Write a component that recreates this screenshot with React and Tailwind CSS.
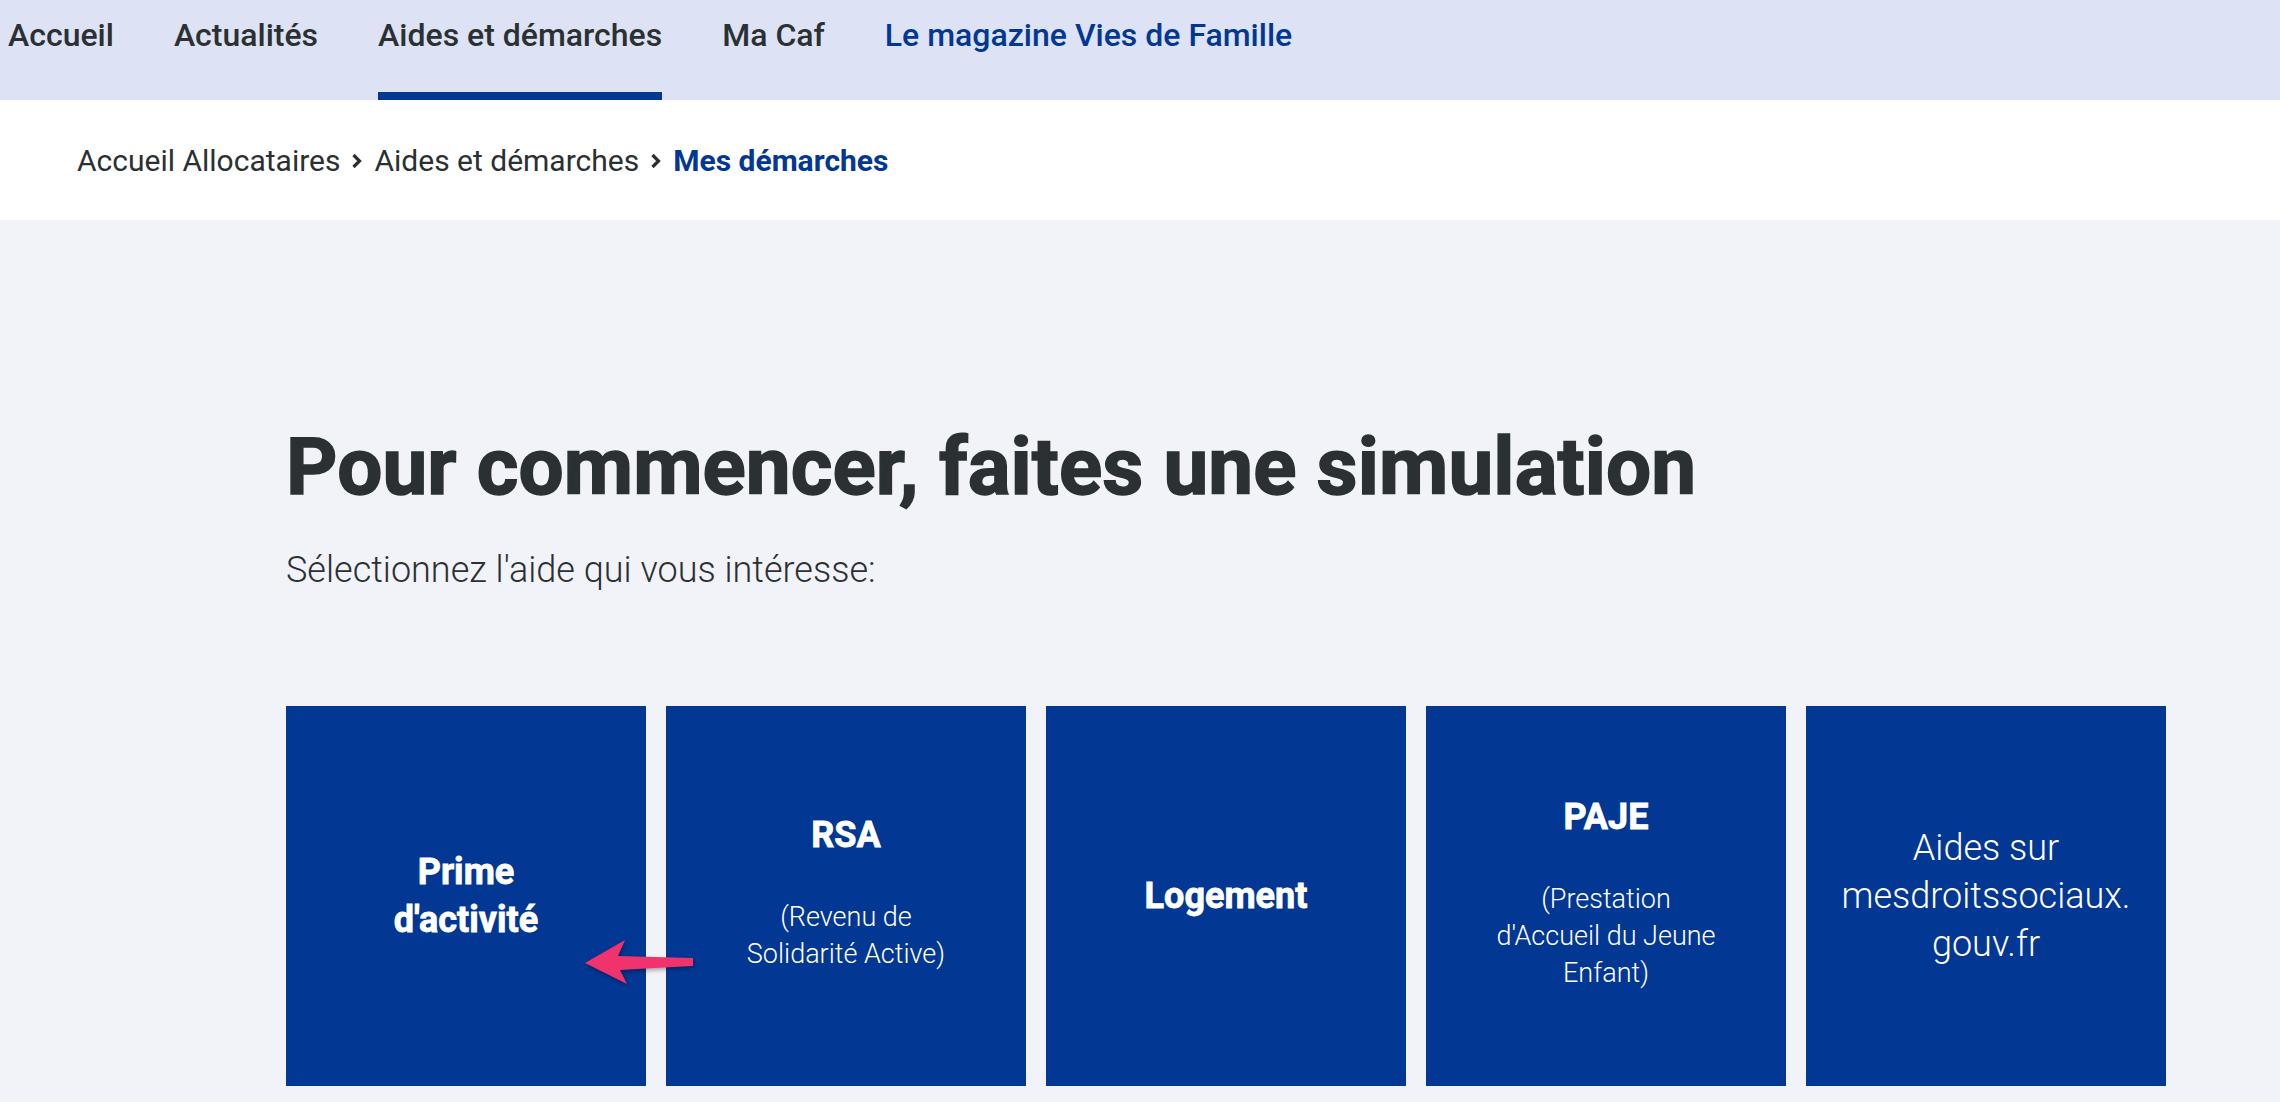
import React from "react";

const navItems = [
  { label: "Accueil" },
  { label: "Actualités" },
  { label: "Aides et démarches", active: true },
  { label: "Ma Caf" },
  { label: "Le magazine Vies de Famille", blue: true },
];

const tiles = [
  { title: ["Prime", "d'activité"] },
  { title: ["RSA"], sub: ["(Revenu de", "Solidarité Active)"] },
  { title: ["Logement"] },
  { title: ["PAJE"], sub: ["(Prestation", "d'Accueil du Jeune", "Enfant)"] },
  { plain: ["Aides sur", "mesdroitssociaux.", "gouv.fr"] },
];

const Chevron = () => (
  <svg width="12" height="16" viewBox="0 0 12 16" className="mx-[11px] mt-[2px]">
    <path d="M2.5 2 L8.5 8 L2.5 14" fill="none" stroke="#2b3033" strokeWidth="3.2" />
  </svg>
);

const Tile = ({ tile }) => (
  <div className="w-[360px] h-[380px] bg-[#023793] flex flex-col items-center justify-center text-center text-white">
    {tile.title && (
      <div className="font-bold text-[36px] leading-[48px] [-webkit-text-stroke:0.8px_white]">
        {tile.title.map((line) => (
          <div key={line}>{line}</div>
        ))}
      </div>
    )}
    {tile.sub && (
      <div className="mt-[40px] mb-[8px] font-light text-[27px] leading-[37px]">
        {tile.sub.map((line) => (
          <div key={line}>{line}</div>
        ))}
      </div>
    )}
    {tile.plain && (
      <div className="font-light text-[36px] leading-[48px]">
        {tile.plain.map((line) => (
          <div key={line}>{line}</div>
        ))}
      </div>
    )}
  </div>
);

const App = () => {
  return (
    <div className="min-h-screen bg-[#f2f3f8] font-[Roboto,sans-serif] text-[#2b3033]">
      <nav className="h-[100px] bg-[#dde3f4] flex gap-[60px] pl-[8px]">
        {navItems.map((item) => (
          <div key={item.label} className="flex flex-col justify-between">
            <span
              className={`pt-[16px] text-[32px] leading-[38px] font-medium whitespace-nowrap ${
                item.blue ? "text-[#023793]" : "text-[#2b3033]"
              }`}
            >
              {item.label}
            </span>
            <div className={`h-[8px] ${item.active ? "bg-[#023793]" : ""}`} />
          </div>
        ))}
      </nav>

      <div className="h-[120px] bg-white flex items-center pl-[77px] text-[30px]">
        <span>Accueil Allocataires</span>
        <Chevron />
        <span>Aides et démarches</span>
        <Chevron />
        <span className="font-bold text-[#023793]">Mes démarches</span>
      </div>

      <main className="pl-[286px] pt-[199px] pb-[16px]">
        <h1 className="text-[80px] leading-[96px] font-bold text-[#2b3033] tracking-[0.1px] [-webkit-text-stroke:1.5px_#2b3033]">
          Pour commencer, faites une simulation
        </h1>
        <p className="mt-[35px] text-[36px] leading-[40px] font-light">
          Sélectionnez l'aide qui vous intéresse:
        </p>

        <div className="relative mt-[116px] flex gap-[20px]">
          {tiles.map((tile, i) => (
            <Tile key={i} tile={tile} />
          ))}
          <svg
            width="120"
            height="60"
            viewBox="0 0 120 60"
            className="absolute left-[295px] top-[228px] drop-shadow-[1px_2px_2px_rgba(0,0,0,0.35)]"
          >
            <path
              d="M4 29 L44 6 L37 22 Q72 23 112 24 L112 32 Q72 34 39 36 L46 50 Z"
              fill="#f0336c"
            />
          </svg>
        </div>
      </main>
    </div>
  );
};

export default App;
